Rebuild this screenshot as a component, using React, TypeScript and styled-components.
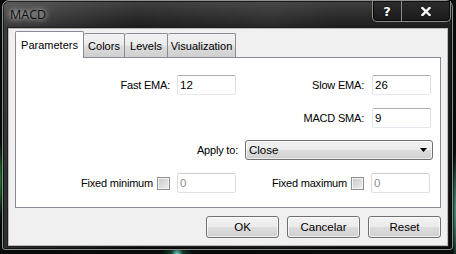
import styled, { createGlobalStyle } from "styled-components";

const GlobalStyle = createGlobalStyle`
  html, body {
    margin: 0;
    padding: 0;
  }
  body {
    width: 456px;
    height: 254px;
    overflow: hidden;
    background:
      radial-gradient(circle at 177px 254px, rgba(120, 230, 220, 0.9) 0, rgba(40, 120, 90, 0.4) 6px, transparent 16px),
      radial-gradient(ellipse 4px 60px at 456px 210px, rgba(90, 200, 170, 0.8), transparent),
      radial-gradient(ellipse 3px 40px at 0 180px, rgba(40, 160, 60, 0.8), transparent),
      #070b09;
    font-family: "Liberation Sans", Arial, sans-serif;
  }
`;

const Desktop = styled.div`
  width: 456px;
  height: 254px;
  box-sizing: border-box;
  padding: 0 3px 4px 2px;
`;

const Window = styled.div`
  height: 100%;
  box-sizing: border-box;
  display: flex;
  flex-direction: column;
  padding: 0 4px 3px 5px;
  border: 1px solid #8d8f8f;
  border-radius: 7px 7px 3px 3px;
  background:
    linear-gradient(90deg, rgba(255, 255, 255, 0.14), transparent 30%, rgba(255, 255, 255, 0.05) 60%, transparent 75%),
    linear-gradient(180deg, #404040 0, #1c1c1c 26px, #121212 60%, #0c0c0c);
  box-shadow: inset 0 0 0 1px rgba(0, 0, 0, 0.6);
`;

const TitleBar = styled.div`
  height: 27px;
  flex: none;
  display: flex;
  align-items: flex-start;
  margin: 0 -4px 0 -5px;
`;

const Title = styled.div`
  margin: 6px 0 0 7px;
  font-family: "Open Sans", "Liberation Sans", sans-serif;
  font-size: 12.5px;
  line-height: 15px;
  color: #0e0e0e;
  text-shadow: 0 0 5px rgba(235, 235, 235, 0.95), 0 0 9px rgba(210, 210, 210, 0.7);
`;

const CaptionGroup = styled.div`
  margin-left: auto;
  margin-right: 1px;
  display: flex;
  height: 20px;
  border: 1px solid #8a8a8a;
  border-top: none;
  border-radius: 0 0 5px 5px;
  background: linear-gradient(180deg, #2c2c2c, #1a1a1a);
  box-shadow: inset 0 0 0 1px rgba(0, 0, 0, 0.7);
  overflow: hidden;
`;

const CaptionButton = styled.div<{ $w: number }>`
  width: ${(p) => p.$w}px;
  display: flex;
  align-items: center;
  justify-content: center;
  color: #fff;
  font-family: "DejaVu Sans", sans-serif;
  font-weight: bold;
  font-size: 13px;
  text-shadow: 0 0 2px #000;
  & + & {
    border-left: 1px solid #8a8a8a;
  }
`;

const Client = styled.div`
  flex: 1;
  display: flex;
  flex-direction: column;
  padding: 2px 6px 0;
  background: #f0f0f0;
  border: 1px solid #b9b9b9;
  box-shadow: 0 0 0 1px #1e1e1e;
`;

const TabStrip = styled.div`
  display: flex;
  align-items: flex-end;
  height: 26px;
`;

const Tab = styled.div<{ $active?: boolean; $w: number }>`
  width: ${(p) => p.$w}px;
  box-sizing: border-box;
  height: ${(p) => (p.$active ? 27 : 24)}px;
  margin-bottom: ${(p) => (p.$active ? -1 : 0)}px;
  position: relative;
  z-index: ${(p) => (p.$active ? 1 : 0)};
  display: flex;
  justify-content: center;
  padding-top: ${(p) => (p.$active ? 7 : 6)}px;
  font-size: 11px;
  line-height: 13px;
  color: #000;
  border: 1px solid #898c95;
  border-bottom: none;
  border-left-width: ${(p) => (p.$active ? 1 : 0)}px;
  border-radius: 2px 2px 0 0;
  background: ${(p) =>
    p.$active
      ? "#fff"
      : "linear-gradient(180deg, #f2f2f2 0%, #ebebeb 48%, #dddddd 52%, #cfcfcf 100%)"};
`;

const Panel = styled.div`
  height: 151px;
  box-sizing: border-box;
  flex: none;
  background: #fff;
  border: 1px solid #898c95;
  padding-top: 17px;
  display: flex;
  flex-direction: column;
`;

const Row = styled.div<{ $mt: number }>`
  display: flex;
  align-items: center;
  height: 20px;
  margin-top: ${(p) => p.$mt}px;
`;

const Label = styled.div<{ $w: number; $gap: number }>`
  width: ${(p) => p.$w}px;
  margin-right: ${(p) => p.$gap}px;
  text-align: right;
  font-size: 11px;
  letter-spacing: -0.2px;
  color: #000;
  white-space: nowrap;
`;

const TextBox = styled.input<{ $disabled?: boolean }>`
  width: 59px;
  height: 20px;
  box-sizing: border-box;
  margin: 0;
  padding: 0 2px;
  outline: none;
  border: 1px solid;
  border-color: ${(p) =>
    p.$disabled ? "#cfcfcf #dcdcdc #e2e2e2 #dcdcdc" : "#abadb3 #dbdfe6 #e3e9ef #e2e3ea"};
  border-radius: 2px;
  background: #fff;
  font-family: "Liberation Sans", Arial, sans-serif;
  font-size: 11.5px;
  color: ${(p) => (p.$disabled ? "#8d8d8d" : "#000")};
`;

const Check = styled.div`
  width: 13px;
  height: 13px;
  box-sizing: border-box;
  margin-right: 7px;
  border: 1px solid #8e8f8f;
  background: linear-gradient(135deg, #c6c8cc, #eeeeee);
  box-shadow: inset 0 0 0 1px #f4f4f4;
`;

const Select = styled.div`
  width: 188px;
  height: 20px;
  box-sizing: border-box;
  display: flex;
  align-items: center;
  padding: 0 5px 0 3px;
  border: 1px solid #707070;
  border-radius: 3px;
  background: linear-gradient(180deg, #f2f2f2 0%, #ebebeb 48%, #dddddd 52%, #cfcfcf 100%);
  box-shadow: inset 0 0 0 1px rgba(255, 255, 255, 0.6);
  font-size: 11.5px;
  color: #000;
  span {
    flex: 1;
  }
`;

const ButtonRow = styled.div`
  display: flex;
  justify-content: flex-end;
  gap: 8px;
  margin-top: 8px;
`;

const Button = styled.div`
  width: 73px;
  height: 22px;
  box-sizing: border-box;
  display: flex;
  align-items: center;
  justify-content: center;
  border: 1px solid #707070;
  border-radius: 3px;
  background: linear-gradient(180deg, #f2f2f2 0%, #ebebeb 48%, #dddddd 52%, #cfcfcf 100%);
  box-shadow: inset 0 0 0 1px rgba(255, 255, 255, 0.7);
  font-size: 11.5px;
  color: #000;
`;

const Arrow = () => (
  <svg width="7" height="4" viewBox="0 0 7 4">
    <path d="M0 0H7L3.5 4Z" fill="#000" />
  </svg>
);

const CloseGlyph = () => (
  <svg width="10" height="9" viewBox="0 0 10 9">
    <path d="M1.5 1L8.5 8M8.5 1L1.5 8" stroke="#fff" strokeWidth="2.4" strokeLinecap="square" />
  </svg>
);

const App = () => {
  return (
    <>
      <GlobalStyle />
      <Desktop>
        <Window>
          <TitleBar>
            <Title>MACD</Title>
            <CaptionGroup>
              <CaptionButton $w={28}>?</CaptionButton>
              <CaptionButton $w={48}>
                <CloseGlyph />
              </CaptionButton>
            </CaptionGroup>
          </TitleBar>
          <Client>
            <TabStrip>
              <Tab $active $w={69}>Parameters</Tab>
              <Tab $w={41}>Colors</Tab>
              <Tab $w={43}>Levels</Tab>
              <Tab $w={68}>Visualization</Tab>
            </TabStrip>
            <Panel>
              <Row $mt={0}>
                <Label $w={154} $gap={7}>Fast EMA:</Label>
                <TextBox readOnly value="12" />
                <Label $w={128} $gap={8}>Slow EMA:</Label>
                <TextBox readOnly value="26" />
              </Row>
              <Row $mt={13}>
                <Label $w={348} $gap={8}>MACD SMA:</Label>
                <TextBox readOnly value="9" />
              </Row>
              <Row $mt={12}>
                <Label $w={222} $gap={7}>Apply to:</Label>
                <Select>
                  <span>Close</span>
                  <Arrow />
                </Select>
              </Row>
              <Row $mt={13}>
                <Label $w={137} $gap={4}>Fixed minimum</Label>
                <Check />
                <TextBox readOnly $disabled value="0" />
                <Label $w={111} $gap={4}>Fixed maximum</Label>
                <Check />
                <TextBox readOnly $disabled value="0" />
              </Row>
            </Panel>
            <ButtonRow>
              <Button>OK</Button>
              <Button>Cancelar</Button>
              <Button>Reset</Button>
            </ButtonRow>
          </Client>
        </Window>
      </Desktop>
    </>
  );
};

export default App;
